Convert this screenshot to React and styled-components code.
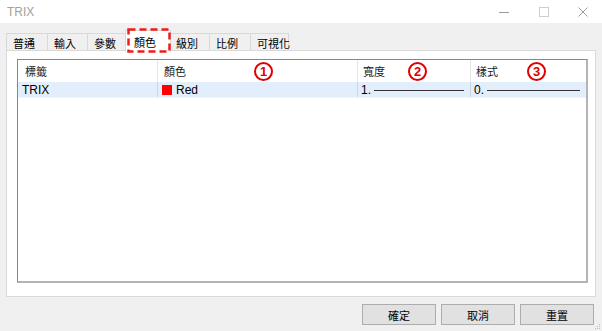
import React from "react";
import styled, { createGlobalStyle } from "styled-components";

const Global = createGlobalStyle`
  html, body { margin: 0; padding: 0; background: #f0f0f0; }
  body { font-family: "Noto Sans CJK TC", "Noto Sans", "Liberation Sans", sans-serif; font-size: 11px; color: #000; }
  * { box-sizing: border-box; }
`;

const Window = styled.div`
  width: 602px;
  height: 331px;
  background: #f0f0f0;
  display: flex;
  flex-direction: column;
  position: relative;
  overflow: hidden;
`;

const TitleBar = styled.div`
  height: 23px;
  background: #fff;
  display: flex;
  align-items: center;
  padding-left: 7px;
  color: #a0a0a0;
  font-family: "Liberation Sans", sans-serif;
  font-size: 12px;
`;

const Title = styled.div`
  flex: 1;
  padding-top: 1px;
`;

const Controls = styled.div`
  display: flex;
  align-items: center;
  height: 100%;
`;

const Ctl = styled.div`
  width: ${(p) => p.w}px;
  height: 23px;
  display: flex;
  align-items: center;
  justify-content: center;
`;

const Body = styled.div`
  flex: 1;
  display: flex;
  flex-direction: column;
  padding: 7px 6px 0 6px;
`;

const TabRow = styled.div`
  display: flex;
  align-items: flex-end;
  height: 21px;
  position: relative;
  z-index: 1;
`;

const Tab = styled.div`
  height: ${(p) => (p.active ? 22 : 18)}px;
  width: ${(p) => p.w}px;
  margin: ${(p) => (p.active ? "0 -1px -1px -1px" : "0 0 0 -1px")};
  background: ${(p) => (p.active ? "#fff" : "#f0f0f0")};
  border: 1px solid #d9d9d9;
  border-bottom: ${(p) => (p.active ? "none" : "1px solid #d9d9d9")};
  display: flex;
  align-items: center;
  padding-left: ${(p) => (p.active ? 8 : 6)}px;
  padding-top: ${(p) => (p.active ? 0 : 1)}px;
  font-size: 11px;
  white-space: nowrap;
  color: #000;
  position: relative;
  z-index: ${(p) => (p.active ? 2 : 1)};
  &:first-child { margin-left: 0; }
`;

const Panel = styled.div`
  height: 247px;
  background: #fff;
  border: 1px solid #d9d9d9;
  margin-top: -1px;
  padding: 8px 7px 13px 10px;
  display: flex;
`;

const List = styled.div`
  flex: 1;
  border: 1px solid #828790;
  border-right-width: 2px;
  border-bottom-width: 2px;
  border-right-color: #b4b4b4;
  border-bottom-color: #b4b4b4;
  background: #fff;
  display: flex;
  flex-direction: column;
`;

const Cols = "140px 200px 113px 1fr";

const HeaderRow = styled.div`
  display: grid;
  grid-template-columns: ${Cols};
  height: 22px;
`;

const HeadCell = styled.div`
  position: relative;
  border-right: 1px solid #e5e5e5;
  padding-left: ${(p) => p.pl ?? 6}px;
  display: flex;
  align-items: center;
  font-size: 11px;
  color: #1a1a1a;
  white-space: nowrap;
  &:last-child { border-right: none; }
`;

const DataRow = styled.div`
  display: grid;
  grid-template-columns: ${Cols};
  height: 16px;
  background: #e2eefb;
  border-bottom: 1px solid #eef4fb;
`;

const Cell = styled.div`
  border-right: 1px solid #c9d5e2;
  padding-left: ${(p) => p.pl ?? 3}px;
  padding-right: ${(p) => p.pr ?? 0}px;
  display: flex;
  align-items: center;
  gap: ${(p) => p.gap ?? 4}px;
  font-family: "Liberation Sans", "Noto Sans CJK TC", sans-serif;
  font-size: 12px;
  color: #000;
  white-space: nowrap;
  &:last-child { border-right: none; }
`;

const Swatch = styled.span`
  width: 10px;
  height: 10px;
  background: ${(p) => p.color};
  flex: none;
`;

const Line = styled.span`
  flex: 1;
  height: 1px;
  border-top: 1.5px solid #333;
  margin-top: 1px;
`;

const Badge = styled.div`
  position: absolute;
  left: ${(p) => p.x}px;
  top: 2px;
  width: 19px;
  height: 19px;
  border: 2px solid #e00000;
  border-radius: 50%;
  background: #fff;
  color: #e00000;
  font-family: "Liberation Sans", sans-serif;
  font-weight: bold;
  font-size: 13px;
  display: flex;
  align-items: center;
  justify-content: center;
  line-height: 1;
`;

const Footer = styled.div`
  display: flex;
  justify-content: flex-end;
  gap: 5px;
  padding: 7px 2px 0 0;
`;

const Button = styled.div`
  width: 74px;
  height: 21px;
  background: #e1e1e1;
  border: 1px solid #adadad;
  display: flex;
  align-items: center;
  justify-content: center;
  font-size: 11px;
  color: #000;
`;

const Highlight = styled.svg`
  position: absolute;
  left: 127px;
  top: 28px;
  overflow: visible;
  z-index: 5;
  pointer-events: none;
`;

const Grip = styled.svg`
  position: absolute;
  right: 1px;
  bottom: 1px;
`;

const tabs = [
  ["普通", 42],
  ["輸入", 41],
  ["參數", 39],
  ["顏色", 46, true],
  ["級別", 41],
  ["比例", 42],
  ["可視化", 39],
];

export default function App() {
  return (
    <Window>
      <Global />
      <TitleBar>
        <Title>TRIX</Title>
        <Controls>
          <Ctl w={40}>
            <svg width="10" height="10" viewBox="0 0 10 10">
              <line x1="0" y1="5.5" x2="10" y2="5.5" stroke="#9a9a9a" strokeWidth="1" />
            </svg>
          </Ctl>
          <Ctl w={40}>
            <svg width="10" height="10" viewBox="0 0 10 10">
              <rect x="0.5" y="0.5" width="9" height="9" fill="none" stroke="#cfcfcf" strokeWidth="1" />
            </svg>
          </Ctl>
          <Ctl w={38}>
            <svg width="10" height="10" viewBox="0 0 10 10">
              <path d="M0.5 0.5 L9.5 9.5 M9.5 0.5 L0.5 9.5" stroke="#9a9a9a" strokeWidth="1" fill="none" />
            </svg>
          </Ctl>
        </Controls>
      </TitleBar>
      <Body>
        <TabRow>
          {tabs.map(([label, w, active]) => (
            <Tab key={label} w={w} active={active}>
              {label}
            </Tab>
          ))}
        </TabRow>
        <Panel>
          <List>
            <HeaderRow>
              <HeadCell pl={7}>標籤</HeadCell>
              <HeadCell>
                顏色
                <Badge x={96}>1</Badge>
              </HeadCell>
              <HeadCell pl={5}>
                寬度
                <Badge x={50}>2</Badge>
              </HeadCell>
              <HeadCell pl={5}>
                樣式
                <Badge x={56}>3</Badge>
              </HeadCell>
            </HeaderRow>
            <DataRow>
              <Cell pl={4}>TRIX</Cell>
              <Cell pl={4} gap={4}>
                <Swatch color="#ff0000" />
                Red
              </Cell>
              <Cell pl={3} pr={6} gap={3}>
                1.
                <Line />
              </Cell>
              <Cell pl={3} pr={6} gap={3}>
                0.
                <Line />
              </Cell>
            </DataRow>
          </List>
        </Panel>
        <Footer>
          <Button>確定</Button>
          <Button>取消</Button>
          <Button>重置</Button>
        </Footer>
      </Body>
      <Highlight width="44" height="25">
        <rect x="1.5" y="1.5" width="41" height="22" fill="none" stroke="#ee1c1c" strokeWidth="2.5" strokeDasharray="7 4" />
      </Highlight>
      <Grip width="8" height="8" viewBox="0 0 8 8">
        <rect x="6" y="2" width="1" height="1" fill="#bbb" />
        <rect x="4" y="4" width="1" height="1" fill="#bbb" />
        <rect x="6" y="4" width="1" height="1" fill="#bbb" />
        <rect x="2" y="6" width="1" height="1" fill="#bbb" />
        <rect x="4" y="6" width="1" height="1" fill="#bbb" />
        <rect x="6" y="6" width="1" height="1" fill="#bbb" />
      </Grip>
    </Window>
  );
}
